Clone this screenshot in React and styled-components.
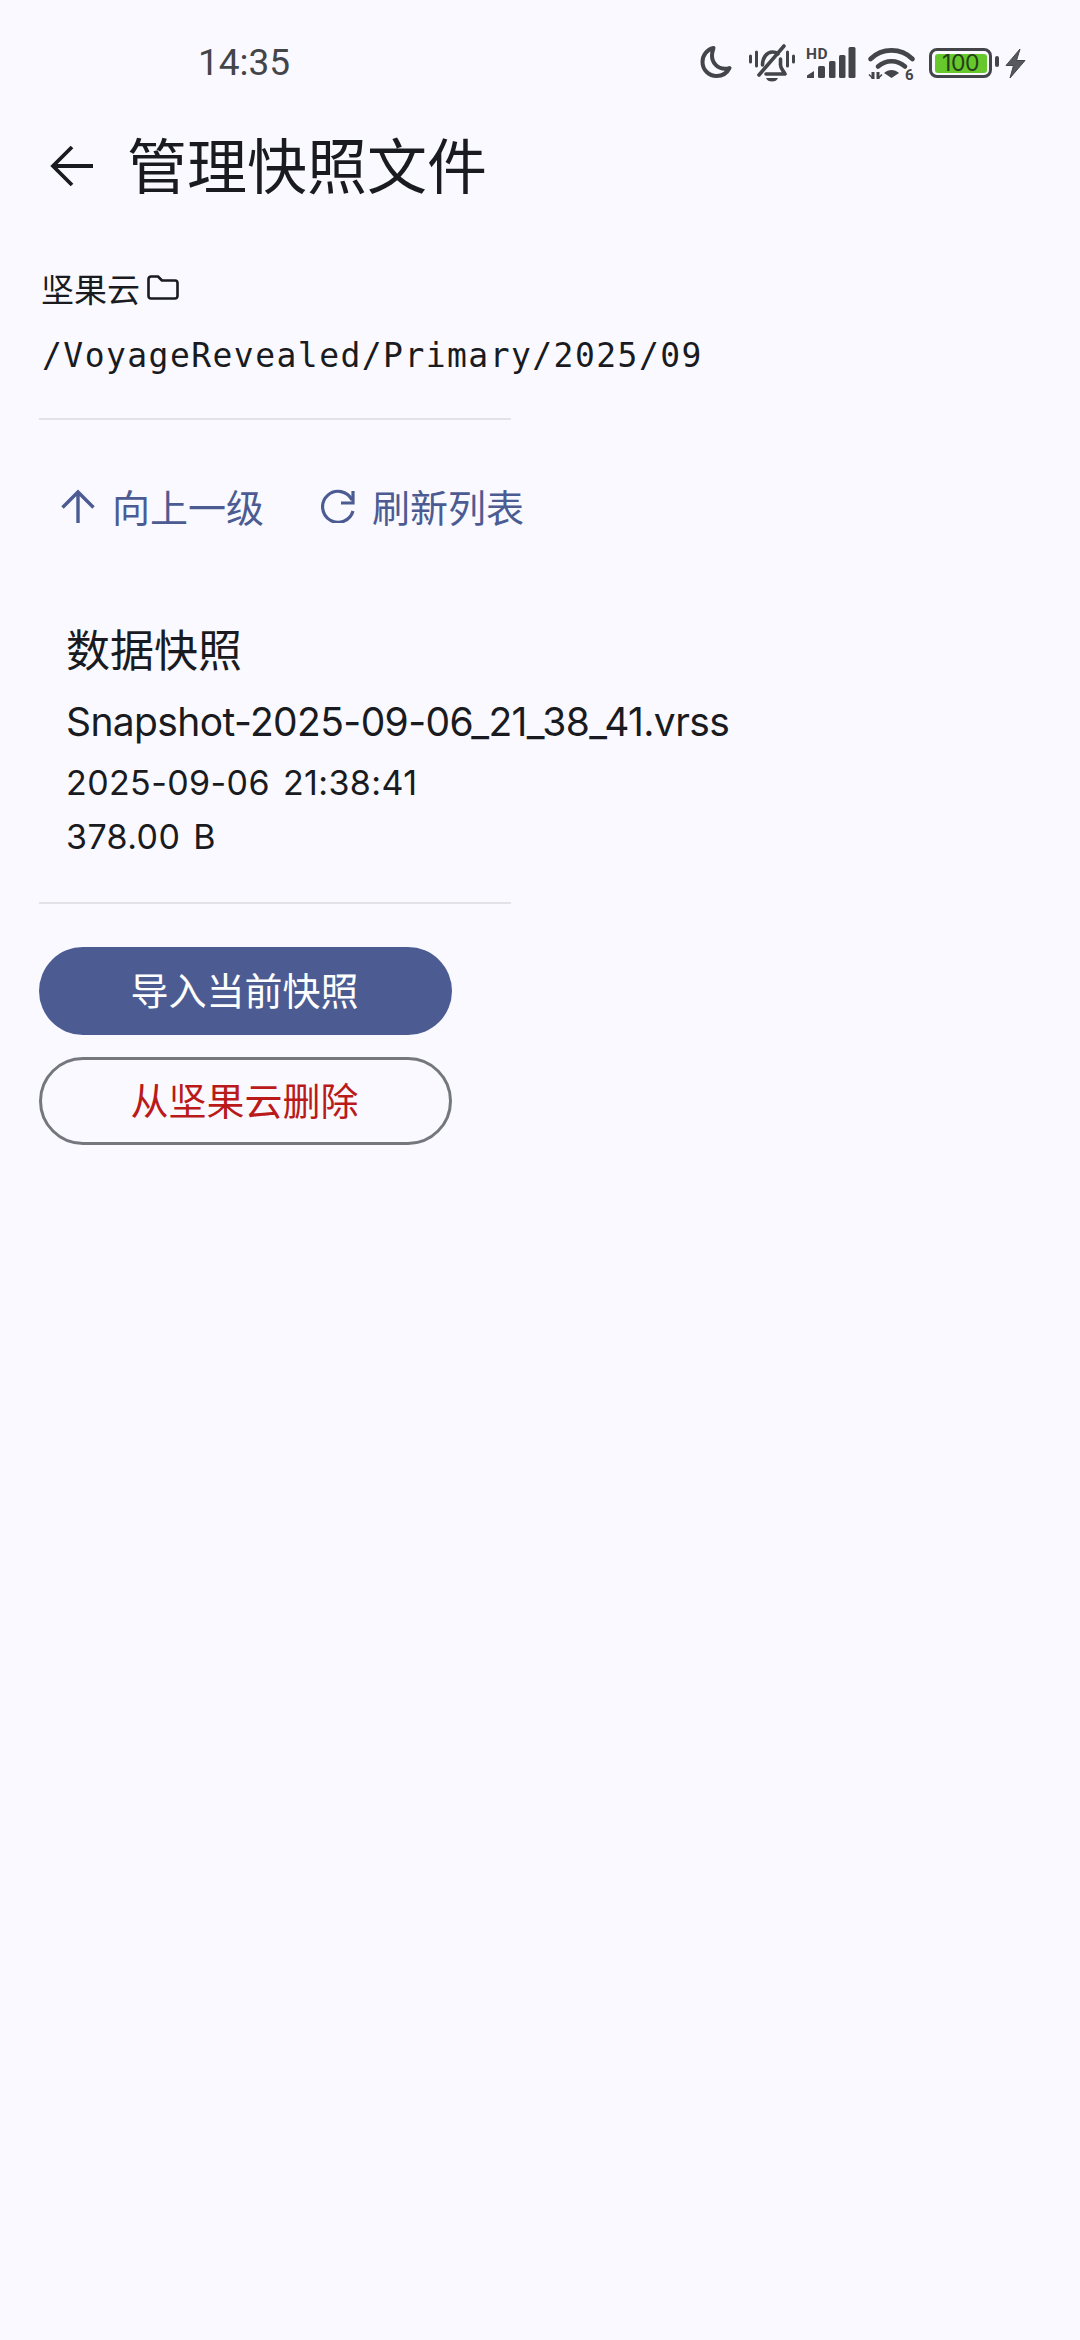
import React from "react";
import styled, { createGlobalStyle } from "styled-components";

const Global = createGlobalStyle`
  html, body { margin: 0; padding: 0; background: #f9f9ff; }
  #root { width: 1080px; min-height: 2340px; }
`;
const CJK = `"Noto Sans CJK SC", "Noto Sans", sans-serif`;
const Latin = `Inter, "Noto Sans CJK SC", sans-serif`;

const Page = styled.div`
  width: 1080px; height: 2340px; background: #f9f9ff; color: #1a1b20;
  display: flex; flex-direction: column; overflow: hidden; font-family: ${CJK};
`;
const StatusBar = styled.div`
  height: 124px; box-sizing: border-box; padding: 42px 55px 0 198px;
  display: flex; justify-content: space-between; align-items: flex-start;
`;
const Time = styled.span`
  font: 400 37px/42px Roboto, sans-serif; color: #444548;
`;
const StatusIcons = styled.div`display: flex; align-items: center; height: 42px;`;
const TopBar = styled.div`
  height: 78px; display: flex; align-items: center; padding: 6px 0 0 49px; box-sizing: border-box; gap: 34px;
`;
const Title = styled.h1`
  margin: -7px 0 0; font: 400 60px/78px ${CJK}; color: #1a1b20;
`;
const Content = styled.div`
  padding: 0 39px; display: flex; flex-direction: column; align-items: flex-start;
`;
const PathHead = styled.div`
  margin-top: 61px; height: 50px; display: flex; align-items: center; gap: 7px; padding-left: 2px;
  font: 400 33px/50px ${CJK};
`;
const PathText = styled.div`
  margin-top: 18px; height: 50px; padding-left: 3px;
  font: 400 33px/50px "DejaVu Sans Mono", "Liberation Mono", monospace; letter-spacing: 1.45px;
  white-space: nowrap;
`;
const Divider = styled.div`
  width: 472px; height: 2px; background: #e2e2e9; margin-top: ${p => p.$top}px;
`;
const Actions = styled.div`
  margin-top: 56px; height: 60px; display: flex; align-items: center; padding-left: 22px;
`;
const TextAction = styled.div`
  display: flex; align-items: center; gap: 17px; color: #4c5c92;
  font: 400 38px/60px ${CJK}; margin-right: ${p => p.$gap || 0}px;
`;
const Item = styled.div`
  margin-top: 82px; padding-left: 27px; display: flex; flex-direction: column;
`;
const ItemTitle = styled.div`font: 400 44px/60px ${CJK}; height: 60px;`;
const FileName = styled.div`font: 400 39px/60px ${Latin}; height: 60px; margin-top: 14px; white-space: nowrap; letter-spacing: -0.62px;`;
const Meta = styled.div`
  font: 400 34px/56px ${Latin}; height: 56px; letter-spacing: 0.4px; word-spacing: 3px;
  white-space: nowrap; margin-top: ${p => p.$top}px;
`;
const Btn = styled.div`
  width: 413px; height: 88px; box-sizing: border-box; border-radius: 44px; padding: 0 2px 4px 0;
  display: flex; align-items: center; justify-content: center;
  font: 400 38px/1 ${CJK}; margin-top: ${p => p.$top}px;
  color: ${p => p.$outline ? "#ba1a1a" : "#fff"};
  background: ${p => p.$outline ? "transparent" : "#4c5c92"};
  border: ${p => p.$outline ? "3px solid #75777f" : "none"};
`;
const StatusGlyph = styled.svg`
  display: block; flex: none; margin-right: ${p => p.$gap || 0}px;
  fill: none; stroke: #444548; overflow: visible;
`;

const Moon = () => (
  <StatusGlyph width="32" height="33" viewBox="-0.500 1 32 33" $gap={17} strokeWidth="4">
    <path d="M13 2C6.500 3.500 2 9 2 16c0 8 6.500 14 14 14 5.500 0 10.500-3 13-8-1.500.6-3 .8-4.500.8-7.500 0-13-6-13-13 0-2.800.7-5.500 1.500-7.800z" strokeLinejoin="round" />
  </StatusGlyph>
);
const BellOff = () => (
  <StatusGlyph width="46" height="38" viewBox="0 0 46 38" $gap={11}>
    <path d="M1.500 12v6M44.500 12v6" strokeWidth="3" strokeLinecap="round" />
    <path d="M7.500 8v14M38.500 8v14" strokeWidth="3" strokeLinecap="round" />
    <path d="M13.500 21c0-7 4-13 10-13 2 0 4 .6 5.500 1.800M31.500 15v6c0 3.500 3 6 4.500 9H17" strokeWidth="3.600" strokeLinecap="round" strokeLinejoin="round" />
    <path d="M10 31L35 2" strokeWidth="3.600" strokeLinecap="round" />
    <path d="M17 34h12c-1 2.500-3 3.500-6 3.500s-5-1-6-3.500z" fill="#444548" stroke="none" />
  </StatusGlyph>
);
const Signal = () => (
  <StatusGlyph width="50" height="32" viewBox="0 0 50 32" $gap={12} stroke="none">
    <text x="0" y="11.500" fontFamily="Roboto, sans-serif" fontWeight="700" fontSize="15.500" fill="#444548" stroke="none" letterSpacing="0.5">HD</text>
    <g fill="#444548" stroke="none">
      <path d="M1 31v-2.500L8 24v7z" />
      <rect x="12" y="19" width="7" height="12" rx="1.500" />
      <rect x="23" y="14" width="6.500" height="17" rx="1.500" />
      <rect x="33" y="8" width="6.500" height="23" rx="1.500" />
      <rect x="42.500" y="0" width="7" height="31" rx="1.500" />
    </g>
  </StatusGlyph>
);
const Wifi = () => (
  <StatusGlyph width="47" height="34" viewBox="0 0 47 34" $gap={14}>
    <path d="M2.500 13C14 1.500 33 1.500 44.500 13" strokeWidth="4.600" strokeLinecap="round" />
    <path d="M10 20.500c8-7 19-7 27 0" strokeWidth="4.600" strokeLinecap="round" />
    <path d="M16 27c4.500-4 10.500-4 15 0l-7.500 5z" fill="#444548" stroke="none" />
    <path d="M5 26v7M10 26v7" strokeWidth="3" />
    <path d="M1 28.500l4 4M14 28.500l-4 4" strokeWidth="1.500" />
    <text x="37" y="33.500" fontFamily="Roboto, sans-serif" fontWeight="700" fontSize="15" fill="#444548" stroke="none">6</text>
  </StatusGlyph>
);
const BatteryBox = styled.div`
  width: 63px; height: 30px; box-sizing: border-box; border: 3.500px solid #444548; border-radius: 8px;
  padding: 2.500px; display: flex; position: relative; margin-right: 14px; flex: none;
  &::after { content: ""; position: absolute; right: -10px; top: 5px; width: 4px; height: 11px; background: #444548; border-radius: 2px; }
`;
const BatteryFill = styled.div`
  flex: 1; background: #66c82b; border-radius: 3px; color: #24401a;
  font: 400 23px/18px Inter, sans-serif; text-align: center; letter-spacing: -0.5px;
`;
const Bolt = () => (
  <StatusGlyph width="19" height="29" viewBox="0 0 19 29" stroke="none">
    <path d="M14 0L0 16.500h7.500L4 29 19 11.500h-8.500L14 0z" fill="#58595c" />
  </StatusGlyph>
);
const Back = () => (
  <svg width="44" height="42" viewBox="0 0 44 42" fill="none" stroke="#1a1b20" strokeWidth="3.800">
    <path d="M44 21H4M23 2L4 21l19 19" />
  </svg>
);
const Folder = () => (
  <svg width="32" height="26" viewBox="0 0 32 26" fill="none" stroke="#1a1b20" strokeWidth="2.600" strokeLinejoin="round">
    <path d="M1.500 4a2.500 2.500 0 0 1 2.500-2.500h7l4 4h13a2.500 2.500 0 0 1 2.500 2.500v13a2.500 2.500 0 0 1-2.500 2.500H4a2.500 2.500 0 0 1-2.500-2.500z" />
  </svg>
);
const Up = () => (
  <svg width="34" height="34" viewBox="0 0 34 34" fill="none" stroke="#4c5c92" strokeWidth="3.400">
    <path d="M17 34V3M1.500 18.500L17 3l15.500 15.500" />
  </svg>
);
const Refresh = () => (
  <svg width="34" height="34" viewBox="0 0 34 34" fill="none" stroke="#4c5c92" strokeWidth="3.200">
    <path d="M31 11A15.500 15.500 0 1 0 32 22" />
    <path d="M32 2v12H20" />
  </svg>
);

export default function App() {
  return (
    <Page>
      <Global />
      <StatusBar>
        <Time>14:35</Time>
        <StatusIcons>
          <Moon /><BellOff /><Signal /><Wifi />
          <BatteryBox><BatteryFill>100</BatteryFill></BatteryBox>
          <Bolt />
        </StatusIcons>
      </StatusBar>
      <TopBar>
        <Back />
        <Title>管理快照文件</Title>
      </TopBar>
      <Content>
        <PathHead>坚果云<Folder /></PathHead>
        <PathText>/VoyageRevealed/Primary/2025/09</PathText>
        <Divider $top={37} />
        <Actions>
          <TextAction $gap={57}><Up />向上一级</TextAction>
          <TextAction><Refresh />刷新列表</TextAction>
        </Actions>
        <Item>
          <ItemTitle>数据快照</ItemTitle>
          <FileName>Snapshot-2025-09-06_21_38_41.vrss</FileName>
          <Meta $top={3}>2025-09-06 21:38:41</Meta>
          <Meta $top={-2}>378.00 B</Meta>
        </Item>
        <Divider $top={37} />
        <Btn $top={43}>导入当前快照</Btn>
        <Btn $top={22} $outline>从坚果云删除</Btn>
      </Content>
    </Page>
  );
}
